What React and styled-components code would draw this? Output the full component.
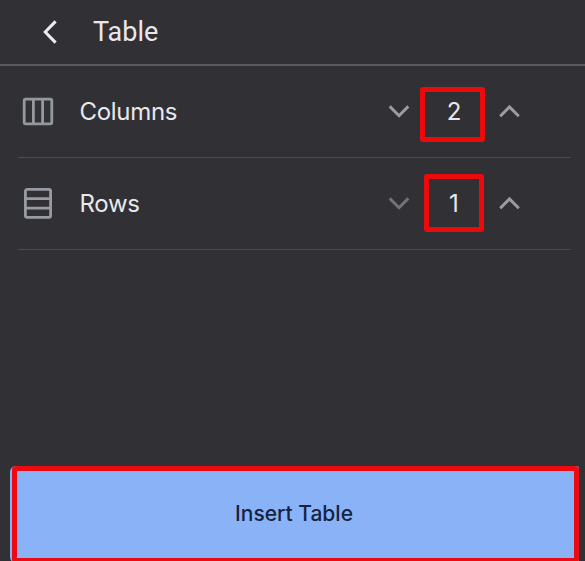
import React, { useState } from "react"
import styled, { createGlobalStyle } from "styled-components"

const BackIcon = () => (
   <svg width='16' height='26' viewBox='0 0 16 26' fill='none'>
      <path d='M13.6 2.4 3.2 13 13.6 23.6' stroke='#ececf0' strokeWidth='3' />
   </svg>
)

const ChevronIcon = ({ up }) => (
   <svg width='22' height='14' viewBox='0 0 22 14' fill='none'>
      <path
         d={up ? "M2.2 12.2 11.5 2.9 20.8 12.2" : "M1.7 2.4 11 11.7 20.3 2.4"}
         stroke='currentColor'
         strokeWidth='3'
      />
   </svg>
)

const ColumnsIcon = () => (
   <svg width='32' height='32' viewBox='0 0 32 32' fill='none'>
      <rect x='2.2' y='4.2' width='27.6' height='24.6' rx='1.5' stroke='#94989f' strokeWidth='2.8' />
      <path d='M11.4 4.5v24M20.6 4.5v24' stroke='#94989f' strokeWidth='2.8' />
   </svg>
)

const RowsIcon = () => (
   <svg width='32' height='32' viewBox='0 0 32 32' fill='none'>
      <rect x='3.4' y='2.4' width='25.2' height='28' rx='1.8' stroke='#989ba2' strokeWidth='2.8' />
      <path d='M3.5 11.6h25M3.5 21.2h25' stroke='#989ba2' strokeWidth='2.8' />
   </svg>
)

const Stepper = ({ value, min, onChange, outline }) => (
   <Controls>
      <StepButton
         aria-label='decrease'
         disabled={value <= min}
         onClick={() => onChange(value - 1)}
      >
         <ChevronIcon />
      </StepButton>
      <Value>
         {value}
         <Outline $inset={outline} />
      </Value>
      <StepButton aria-label='increase' onClick={() => onChange(value + 1)}>
         <ChevronIcon up />
      </StepButton>
   </Controls>
)

const App = () => {
   const [columns, setColumns] = useState(2)
   const [rows, setRows] = useState(1)
   return (
      <>
         <GlobalStyle />
         <Screen>
            <Header>
               <BackButton aria-label='back'>
                  <BackIcon />
               </BackButton>
               <Title>Table</Title>
            </Header>
            <List>
               <Row>
                  <ColumnsIcon />
                  <Label>Columns</Label>
                  <Stepper
                     value={columns}
                     min={1}
                     onChange={setColumns}
                     outline='6px 13px -1px 10px'
                  />
               </Row>
               <Row>
                  <RowsIcon />
                  <Label>Rows</Label>
                  <Stepper
                     value={rows}
                     min={1}
                     onChange={setRows}
                     outline='1px 14px 1px 14px'
                  />
               </Row>
            </List>
            <Footer>
               <InsertButton>
                  <span>Insert Table</span>
               </InsertButton>
            </Footer>
         </Screen>
      </>
   )
}

export default App

const GlobalStyle = createGlobalStyle`
   * {
      box-sizing: border-box;
   }
   body {
      margin: 0;
      background: #313035;
      overflow: hidden;
   }
   button {
      padding: 0;
      border: 0;
      background: none;
      font: inherit;
   }
   svg {
      display: block;
      flex-shrink: 0;
   }
`
const Screen = styled.div`
   display: flex;
   flex-direction: column;
   height: 561px;
   background: #313035;
   color: #e8e8ec;
   font-family: Inter, "Liberation Sans", sans-serif;
   overflow: hidden;
`
const Header = styled.header`
   display: flex;
   align-items: center;
   height: 66px;
   padding-left: 42px;
   border-bottom: 2px solid #5b5b5f;
`
const BackButton = styled.button`
   width: 51px;
   color: #ececf0;
`
const Title = styled.h1`
   margin: 0;
   font-family: Roboto, sans-serif;
   font-size: 27px;
   font-weight: 400;
   line-height: 32px;
`
const List = styled.div`
   padding: 0 14px 0 18px;
`
const Row = styled.div`
   display: flex;
   align-items: center;
   height: 92px;
   padding: 0 51px 1px 4px;
   border-bottom: 1px solid #4c4b50;
`
const Label = styled.span`
   margin-left: 25.5px;
   padding-top: 2px;
   font-size: 24px;
   letter-spacing: -0.3px;
   line-height: 32px;
`
const Controls = styled.div`
   display: flex;
   align-items: center;
   margin-left: auto;
`
const StepButton = styled.button`
   color: #9b9ca2;

   &:disabled {
      color: #737277;
   }
`
const Value = styled.div`
   position: relative;
   display: flex;
   align-items: center;
   justify-content: center;
   width: 88px;
   height: 60px;
   font-size: 24px;
`
const Outline = styled.span`
   position: absolute;
   inset: ${({ $inset }) => $inset};
   border: 5px solid #ed0a0d;
   border-radius: 3px;
   pointer-events: none;
`
const Footer = styled.footer`
   height: 95px;
   margin-top: auto;
   padding: 0 6px 0 10px;
`
const InsertButton = styled.button`
   display: block;
   width: 100%;
   height: 97px;
   padding-left: 2px;
   border-radius: 6px 3px 3px 6px;
   background: #8ab2f7;

   span {
      display: flex;
      align-items: center;
      justify-content: center;
      height: 97px;
      padding: 0 3px 2px 0;
      border: 5px solid #ed0a12;
      border-radius: 4px;
      color: #15233f;
      font-size: 21px;
      font-weight: 500;
   }
`
